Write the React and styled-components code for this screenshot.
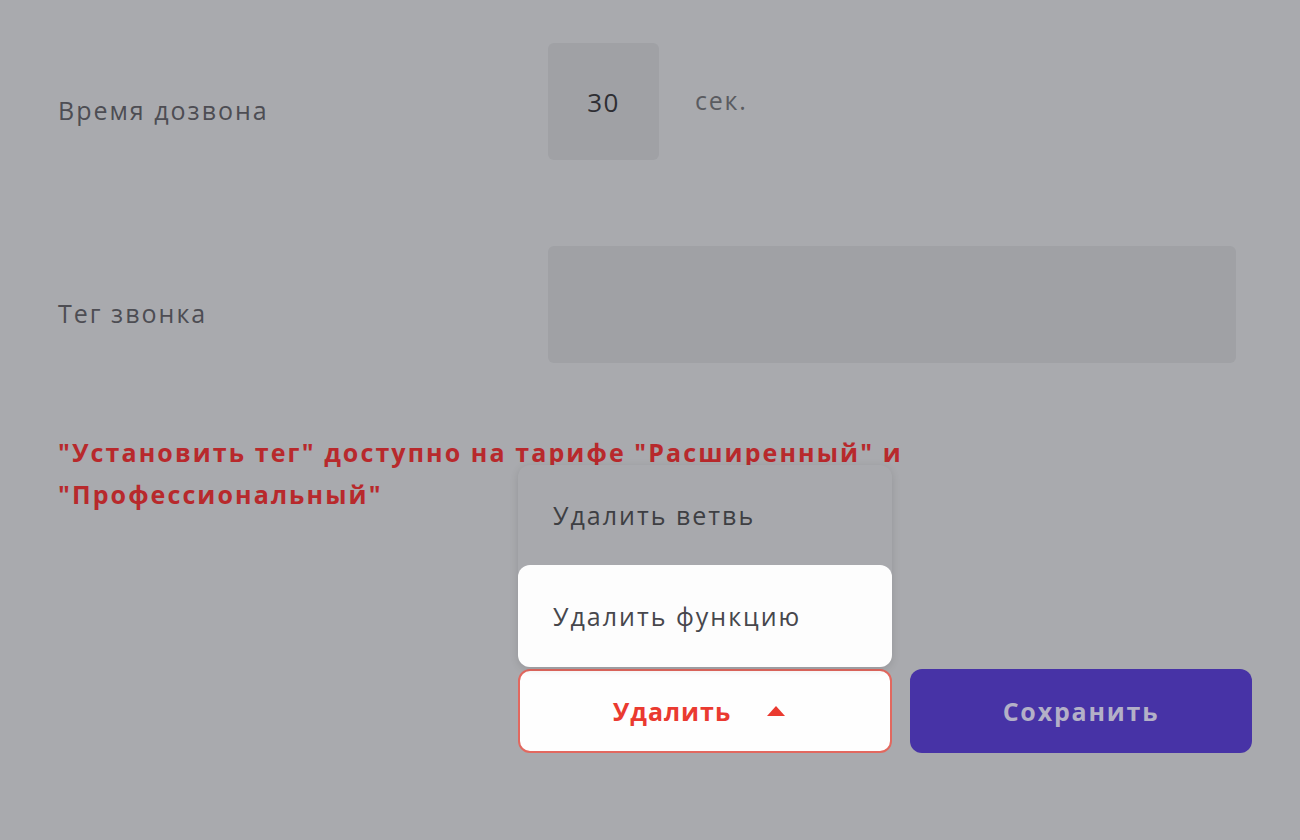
import React from "react";
import styled, { createGlobalStyle } from "styled-components";

const Global = createGlobalStyle`
  html, body { margin: 0; padding: 0; background: #a9aaae; }
  body { font-family: "Open Sans", "Noto Sans", sans-serif; }
  * { box-sizing: border-box; }
`;

const Page = styled.div`
  width: 1300px;
  height: 840px;
  background: #a9aaae;
  padding: 43px 48px 0 58px;
  display: flex;
  flex-direction: column;
  overflow: hidden;
`;

const Row = styled.div`
  display: grid;
  grid-template-columns: 490px 1fr;
  align-items: center;
  margin-bottom: ${(p) => p.$mb || 0}px;
`;

const Label = styled.div`
  font-size: 25px;
  color: #4d4d53;
  letter-spacing: 2px;
  padding-top: ${(p) => p.$pt || 0}px;
`;

const Inline = styled.div`
  display: flex;
  align-items: center;
  gap: 36px;
`;

const Field = styled.div`
  width: ${(p) => p.$w};
  height: 117px;
  background: #a0a1a5;
  border-radius: 6px;
  display: flex;
  align-items: center;
  justify-content: center;
  font-size: 26px;
  letter-spacing: 1.5px;
  color: #2e2e33;
`;

const Unit = styled.span`
  font-size: 25px;
  color: #5a5b60;
  letter-spacing: 1.8px;
  margin-bottom: 4px;
`;

const Note = styled.div`
  width: 860px;
  color: #b8292c;
  font-weight: 700;
  font-size: 25px;
  line-height: 42px;
  letter-spacing: 2.1px;
  margin-top: 68px;
`;

const Actions = styled.div`
  display: flex;
  gap: 18px;
  margin-top: auto;
  margin-bottom: 87px;
  margin-left: 460px;
`;

const DeleteWrap = styled.div`
  position: relative;
  width: 374px;
`;

const DeleteButton = styled.button`
  width: 100%;
  height: 84px;
  background: #fefefe;
  border: 2px solid #e2685f;
  border-radius: 12px;
  display: flex;
  align-items: center;
  justify-content: center;
  gap: 36px;
  font-family: inherit;
  font-size: 25px;
  font-weight: 700;
  letter-spacing: 1px;
  color: #ea3a30;
  padding: 0 12px 0 0;
`;

const Menu = styled.div`
  position: absolute;
  left: 0;
  right: 0;
  bottom: calc(100% + 2px);
  background: #a8a9ad;
  border-radius: 12px;
  box-shadow: 0 2px 8px rgba(0, 0, 0, 0.12);
  display: flex;
  flex-direction: column;
`;

const MenuItem = styled.div`
  height: ${(p) => p.$h}px;
  padding-left: 35px;
  display: flex;
  align-items: center;
  font-size: 25px;
  letter-spacing: 2px;
  color: ${(p) => (p.$active ? "#47474c" : "#3e3f43")};
  background: ${(p) => (p.$active ? "#fdfdfd" : "transparent")};
  border-radius: 12px;
`;

const SaveButton = styled.button`
  width: 342px;
  height: 84px;
  border: none;
  border-radius: 12px;
  background: #4733a6;
  color: #b3b0c7;
  font-family: inherit;
  font-size: 25px;
  font-weight: 700;
  letter-spacing: 1.8px;
`;

const Caret = () => (
  <svg width="18" height="10" viewBox="0 0 18 10">
    <path d="M9 0 L18 10 L0 10 Z" fill="#ea3a30" />
  </svg>
);

export default function App() {
  return (
    <>
      <Global />
      <Page>
        <Row $mb={86}>
          <Label $pt={16}>Время дозвона</Label>
          <Inline>
            <Field $w="111px">30</Field>
            <Unit>сек.</Unit>
          </Inline>
        </Row>
        <Row>
          <Label $pt={16}>Тег звонка</Label>
          <Field $w="688px" />
        </Row>
        <Note>
          "Установить тег" доступно на тарифе "Расширенный" и "Профессиональный"
        </Note>
        <Actions>
          <DeleteWrap>
            <Menu>
              <MenuItem $h={100}>Удалить ветвь</MenuItem>
              <MenuItem $h={102} $active>
                Удалить функцию
              </MenuItem>
            </Menu>
            <DeleteButton>
              Удалить <Caret />
            </DeleteButton>
          </DeleteWrap>
          <SaveButton>Сохранить</SaveButton>
        </Actions>
      </Page>
    </>
  );
}
